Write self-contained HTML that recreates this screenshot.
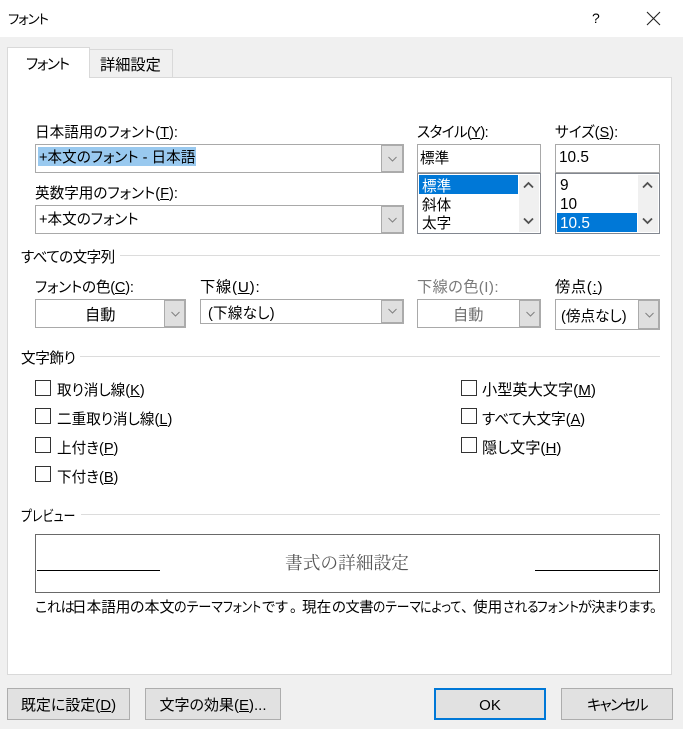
<!DOCTYPE html>
<html lang="ja"><head><meta charset="utf-8"><style>
html,body{margin:0;padding:0;width:683px;height:729px;overflow:hidden;background:#f0f0f0}
body{position:relative;font-family:"Liberation Sans","Noto Sans CJK JP",sans-serif;font-size:14.6px;color:#000;font-feature-settings:"palt"}
div,span.t{position:absolute;box-sizing:border-box}
.t{white-space:nowrap;line-height:20px;height:20px}
.f{border:1px solid #a9a9a9;background:#fff}
.a{background:#dfdfdf;border:2px solid #ababab;border-left-width:1px}
.a svg{position:absolute;left:5px;top:10px}
.l{border:1px solid #828790;background:#fff}
.sb{background:#f0f0f0}
.sel{background:#0078d7}
.ln{height:1px;background:#dcdcdc}
.c{width:16px;height:16px;border:1px solid #333;background:#fff}
.b{background:#e1e1e1;border:1px solid #adadad;text-align:center;line-height:34px;height:32px;font-size:15px}
.k{font-size:15.2px}
.n{font-size:15.4px}
.d{top:598px;font-size:14.2px;transform-origin:0 50%}
</style></head><body>
<div style="left:0;top:0;width:683px;height:37px;background:#fff"></div>
<span class="t" style="left:8px;top:10px;font-size:13.5px;letter-spacing:-1.1px">フォント</span>
<span class="t" style="left:592px;top:8px;font-size:14px">?</span>
<svg style="position:absolute;left:646px;top:11px" width="15" height="15"><path d="M1 1L14 14M14 1L1 14" stroke="#222" stroke-width="1.1" fill="none"/></svg>

<div style="left:7px;top:77px;width:665px;height:598px;background:#fff;border:1px solid #d9d9d9"></div>
<div style="left:89px;top:49px;width:84px;height:29px;background:#f0f0f0;border:1px solid #d9d9d9"></div>
<div style="left:7px;top:47px;width:83px;height:31px;background:#fff;border:1px solid #d9d9d9;border-bottom:0"></div>
<span class="t" style="left:26px;top:55px;letter-spacing:-1.3px">フォント</span>
<span class="t k" style="left:100px;top:56px">詳細設定</span>

<span class="t" style="left:35px;top:123px">日本語用のフォント(<u>T</u>):</span>
<div class="f" style="left:35px;top:144px;width:369px;height:29px"></div>
<div style="left:38px;top:147px;width:158px;height:19px;background:#99c9ef"></div>
<span class="t" style="left:39px;top:148px">+本文のフォント - 日本語</span>
<div class="a" style="left:381px;top:144px;width:23px;height:29px"><svg width="11" height="7"><path d="M1.5 1L5.5 5L9.5 1" stroke="#808080" fill="none"/></svg></div>

<span class="t" style="left:35px;top:184px">英数字用のフォント(<u>F</u>):</span>
<div class="f" style="left:35px;top:205px;width:369px;height:29px"></div>
<span class="t" style="left:39px;top:210px">+本文のフォント</span>
<div class="a" style="left:381px;top:205px;width:23px;height:29px"><svg width="11" height="7"><path d="M1.5 1L5.5 5L9.5 1" stroke="#808080" fill="none"/></svg></div>

<span class="t" style="left:417px;top:123px;letter-spacing:-.6px">スタイル(<u>Y</u>):</span>
<div class="f" style="left:417px;top:144px;width:124px;height:29px"></div>
<span class="t" style="left:420px;top:149px">標準</span>
<div class="l" style="left:417px;top:173px;width:124px;height:61px"></div>
<div class="sel" style="left:419px;top:175px;width:99px;height:19px"></div>
<div class="sb" style="left:519px;top:175px;width:20px;height:57px"></div>
<span class="t" style="left:422px;top:177px;color:#fff">標準</span>
<span class="t" style="left:422px;top:196px">斜体</span>
<span class="t" style="left:422px;top:214px">太字</span>
<svg style="position:absolute;left:523px;top:181px" width="11" height="8"><path d="M1 6.5L5.5 2L10 6.5" stroke="#505050" stroke-width="1.8" fill="none"/></svg>
<svg style="position:absolute;left:523px;top:217px" width="11" height="8"><path d="M1 1.5L5.5 6L10 1.5" stroke="#505050" stroke-width="1.8" fill="none"/></svg>

<span class="t" style="left:555px;top:123px">サイズ(<u>S</u>):</span>
<div class="f" style="left:555px;top:144px;width:105px;height:29px"></div>
<span class="t n" style="left:559px;top:148px">10.5</span>
<div class="l" style="left:555px;top:173px;width:105px;height:61px"></div>
<div class="sel" style="left:557px;top:213px;width:80px;height:19px"></div>
<div class="sb" style="left:638px;top:175px;width:20px;height:57px"></div>
<span class="t n" style="left:560px;top:176px">9</span>
<span class="t n" style="left:560px;top:195px">10</span>
<span class="t n" style="left:560px;top:214px;color:#fff">10.5</span>
<svg style="position:absolute;left:642px;top:181px" width="11" height="8"><path d="M1 6.5L5.5 2L10 6.5" stroke="#505050" stroke-width="1.8" fill="none"/></svg>
<svg style="position:absolute;left:642px;top:217px" width="11" height="8"><path d="M1 1.5L5.5 6L10 1.5" stroke="#505050" stroke-width="1.8" fill="none"/></svg>

<span class="t" style="left:21px;top:248px;letter-spacing:-.6px">すべての文字列</span>
<div class="ln" style="left:120px;top:255px;width:540px"></div>

<span class="t" style="left:35px;top:278px;letter-spacing:-.2px">フォントの色(<u>C</u>):</span>
<div class="f" style="left:35px;top:299px;width:151px;height:29px"></div>
<span class="t k" style="left:85px;top:306px">自動</span>
<div class="a" style="left:164px;top:299px;width:22px;height:29px"><svg width="11" height="7"><path d="M1.5 1L5.5 5L9.5 1" stroke="#808080" fill="none"/></svg></div>

<span class="t k" style="left:200px;top:278px;letter-spacing:.8px">下線(<u>U</u>):</span>
<div class="f" style="left:200px;top:299px;width:204px;height:25px"></div>
<span class="t" style="left:208px;top:304px;letter-spacing:.2px">(下線なし)</span>
<div class="a" style="left:381px;top:299px;width:23px;height:25px"><svg width="11" height="7" style="top:7px"><path d="M1.5 1L5.5 5L9.5 1" stroke="#808080" fill="none"/></svg></div>

<span class="t k" style="left:417px;top:278px;color:#7a7a7a;letter-spacing:.4px">下線の色(I):</span>
<div class="f" style="left:417px;top:299px;width:124px;height:29px"></div>
<span class="t k" style="left:453px;top:306px;color:#6d6d6d">自動</span>
<div class="a" style="left:519px;top:299px;width:22px;height:29px"><svg width="11" height="7"><path d="M1.5 1L5.5 5L9.5 1" stroke="#808080" fill="none"/></svg></div>

<span class="t k" style="left:555px;top:278px;letter-spacing:.7px">傍点(<u>:</u>)</span>
<div class="f" style="left:555px;top:299px;width:105px;height:31px"></div>
<span class="t" style="left:561px;top:307px">(傍点なし)</span>
<div class="a" style="left:638px;top:299px;width:22px;height:31px"><svg width="11" height="7" style="top:11px"><path d="M1.5 1L5.5 5L9.5 1" stroke="#808080" fill="none"/></svg></div>

<span class="t" style="left:21px;top:349px;letter-spacing:-.4px">文字飾り</span>
<div class="ln" style="left:80px;top:356px;width:580px"></div>

<div class="c" style="left:35px;top:380px"></div><span class="t" style="left:57px;top:381px">取り消し線(<u>K</u>)</span>
<div class="c" style="left:35px;top:408px"></div><span class="t" style="left:57px;top:410px">二重取り消し線(<u>L</u>)</span>
<div class="c" style="left:35px;top:437px"></div><span class="t" style="left:57px;top:439px">上付き(<u>P</u>)</span>
<div class="c" style="left:35px;top:466px"></div><span class="t" style="left:57px;top:468px">下付き(<u>B</u>)</span>
<div class="c" style="left:461px;top:380px"></div><span class="t k" style="left:482px;top:381px">小型英大文字(<u>M</u>)</span>
<div class="c" style="left:461px;top:408px"></div><span class="t" style="left:482px;top:410px">すべて大文字(<u>A</u>)</span>
<div class="c" style="left:461px;top:437px"></div><span class="t k" style="left:482px;top:439px">隠し文字(<u>H</u>)</span>

<span class="t" style="left:21px;top:507px;transform:scaleX(.82);transform-origin:0 50%">プレビュー</span>
<div class="ln" style="left:81px;top:514px;width:579px"></div>
<div style="left:35px;top:534px;width:625px;height:59px;background:#fff;border:1px solid #696969"></div>
<div style="left:37px;top:570px;width:123px;height:1px;background:#000"></div>
<div style="left:535px;top:570px;width:123px;height:1px;background:#000"></div>
<span class="t" style="left:285px;top:553px;font-family:'Liberation Serif','Noto Serif CJK SC',serif;font-size:17.7px;color:#555;font-feature-settings:normal">書式の詳細設定</span>
<span class="t d" style="left:35px;letter-spacing:-.4px">これは</span>
<span class="t d" style="left:72px;font-size:14.6px">日本語用</span>
<span class="t d" style="left:130px;font-size:15px">の本文</span>
<span class="t d" style="left:174px;transform:scaleX(.92)">のテーマ</span>
<span class="t d" style="left:223px;transform:scaleX(.82)">フォント</span>
<span class="t d" style="left:262px">です</span>
<span class="t d" style="left:290px;font-feature-settings:normal">。</span>
<span class="t d" style="left:302px;font-size:14.6px">現在</span>
<span class="t d" style="left:332px;font-size:14.4px;letter-spacing:-.5px">の文書</span>
<span class="t d" style="left:373px;transform:scaleX(.9)">のテーマ</span>
<span class="t d" style="left:420px;transform:scaleX(.84)">によって</span>
<span class="t d" style="left:461px;font-feature-settings:normal">、</span>
<span class="t d" style="left:473px;font-size:14.6px">使用</span>
<span class="t d" style="left:503px;transform:scaleX(.9)">される</span>
<span class="t d" style="left:537px;transform:scaleX(.9)">フォント</span>
<span class="t d" style="left:578px;letter-spacing:-.8px">が決まります</span>
<span class="t d" style="left:650px;font-feature-settings:normal">。</span>

<div class="b" style="left:7px;top:688px;width:123px">既定に設定(<u>D</u>)</div>
<div class="b" style="left:145px;top:688px;width:136px">文字の効果(<u>E</u>)...</div>
<div class="b" style="left:434px;top:688px;width:112px;border:2px solid #0078d7;line-height:32px">OK</div>
<div class="b" style="left:561px;top:688px;width:112px;letter-spacing:-1.6px">キャンセル</div>
</body></html>
